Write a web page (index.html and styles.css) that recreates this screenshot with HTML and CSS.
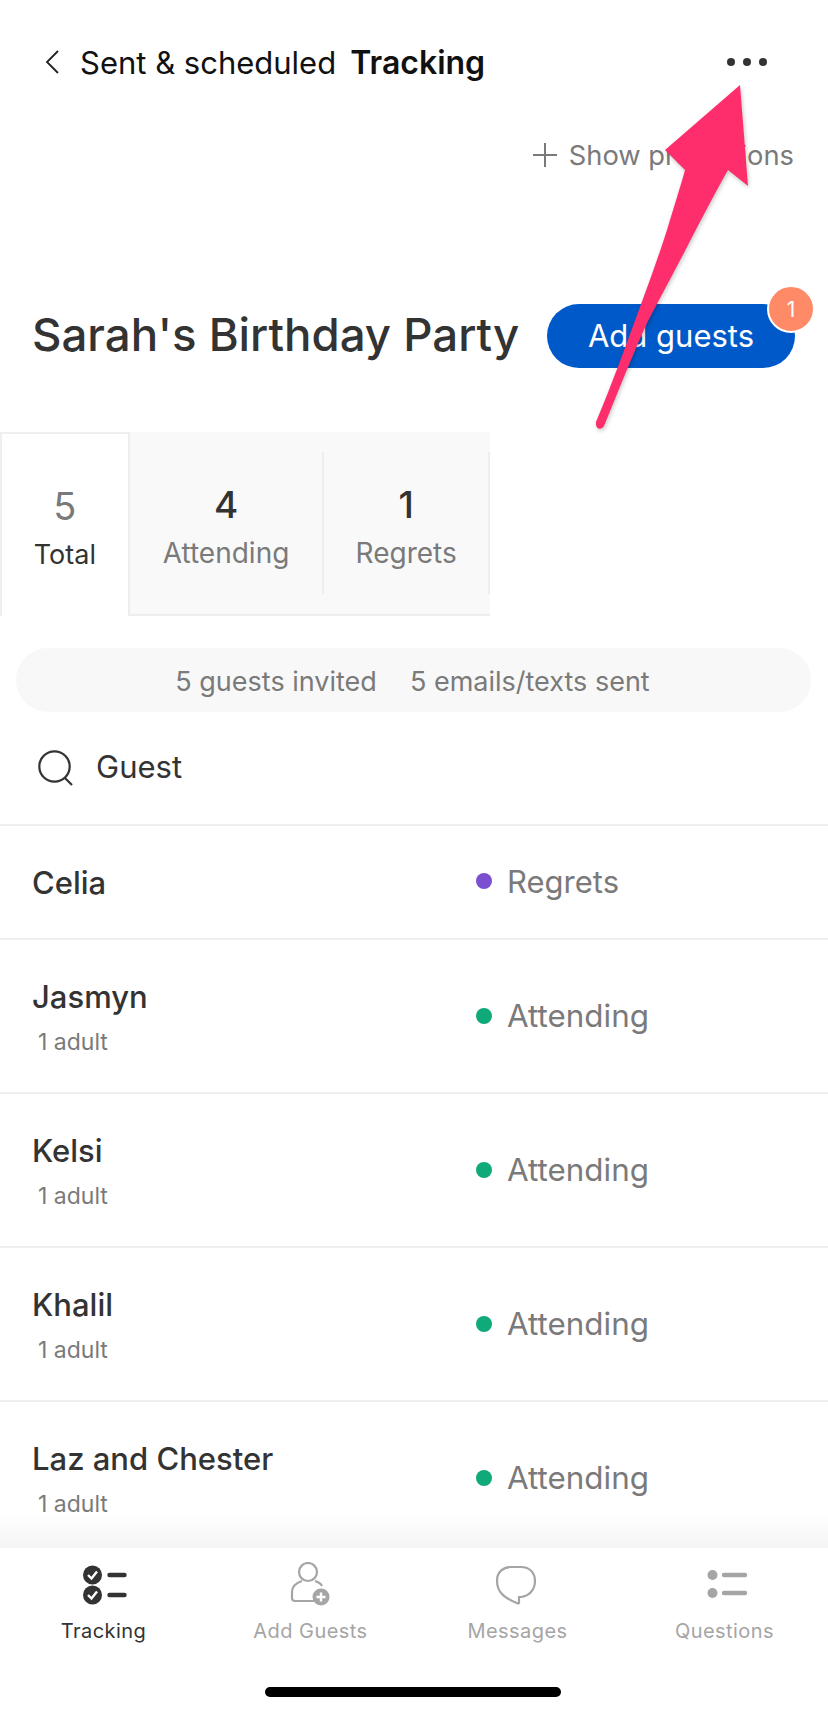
FILE: index.html
```html
<!DOCTYPE html>
<html lang="en">
<head>
<meta charset="utf-8">
<title>Tracking</title>
<link rel="stylesheet" href="styles.css">
</head>
<body>
<div class="page">
  <header class="topbar">
    <svg class="chevron" viewBox="0 0 14 24"><path d="M13 1 2 12l11 11"/></svg>
    <span class="crumb">Sent &amp; scheduled</span>
    <strong class="crumb-current">Tracking</strong>
    <span class="more"><i></i><i></i><i></i></span>
  </header>
  <div class="promo">
    <svg class="plus" viewBox="0 0 24 24"><path d="M12 0v24M0 12h24"/></svg>
    <span>Show promotions</span>
  </div>
  <div class="title-row">
    <h1>Sarah's Birthday Party</h1>
    <button class="add"><span class="add-label">Add guests</span><span class="badge">1</span></button>
  </div>
  <div class="stats">
    <div class="stat active"><b>5</b><span>Total</span></div>
    <div class="stat wide"><b>4</b><span>Attending</span></div>
    <i class="sep"></i>
    <div class="stat regrets"><b>1</b><span>Regrets</span></div>
    <i class="sep"></i>
  </div>
  <div class="summary"><span>5 guests invited</span><span>5 emails/texts sent</span></div>
  <div class="search">
    <svg viewBox="0 0 36 36"><circle cx="16.5" cy="16.5" r="15.2"/><path d="m27 28 7 7"/></svg>
    <span>Guest</span>
  </div>
  <main class="list">
    <div class="row short"><div class="who"><div class="name">Celia</div></div><div class="status"><i class="dot purple"></i>Regrets</div></div>
    <div class="row"><div class="who"><div class="name">Jasmyn</div><div class="sub">1 adult</div></div><div class="status"><i class="dot green"></i>Attending</div></div>
    <div class="row"><div class="who"><div class="name">Kelsi</div><div class="sub">1 adult</div></div><div class="status"><i class="dot green"></i>Attending</div></div>
    <div class="row"><div class="who"><div class="name">Khalil</div><div class="sub">1 adult</div></div><div class="status"><i class="dot green"></i>Attending</div></div>
    <div class="row"><div class="who"><div class="name">Laz and Chester</div><div class="sub">1 adult</div></div><div class="status"><i class="dot green"></i>Attending</div></div>
  </main>
  <nav class="nav">
    <div class="tab current">
      <svg viewBox="0 0 48 44">
        <circle class="fill" cx="12.5" cy="13" r="9.5"/><path class="tick" d="m8 13 3.5 3.5 5.5-7"/>
        <circle class="fill" cx="12.5" cy="33" r="9.5"/><path class="tick" d="m8 33 3.5 3.5 5.5-7"/>
        <path class="bar" d="M29.5 13h15M29.5 33h15"/>
      </svg>
      <span>Tracking</span>
    </div>
    <div class="tab">
      <svg viewBox="0 0 48 44">
        <circle class="line" cx="21" cy="10" r="9"/>
        <path class="line" d="M15 19c-6 2-10 6-10 11v6c0 2 1 3 3 3h19M28 19c3 1 6 3 7 5"/>
        <circle class="fill" cx="34" cy="35" r="8.5"/>
        <path class="plus-mark" d="M34 30.5v9M29.5 35h9"/>
      </svg>
      <span>Add Guests</span>
    </div>
    <div class="tab">
      <svg viewBox="0 0 48 44">
        <path class="line" d="M17 5h10c9 0 14 6 14 14 0 9-6 15-14 16h-2v6l-1 .5C13 37 3 32 3 19 3 10 9 5 17 5Z"/>
      </svg>
      <span>Messages</span>
    </div>
    <div class="tab">
      <svg viewBox="0 0 48 44">
        <circle class="fill" cx="11.5" cy="13" r="5"/><circle class="fill" cx="11.5" cy="31" r="5"/>
        <path class="bar" d="M23 13h21M23 31h21"/>
      </svg>
      <span>Questions</span>
    </div>
  </nav>
  <div class="home-zone"><span class="home"></span></div>
  <svg class="arrow" viewBox="0 0 828 1714">
    <path d="M740 85 748 186 728 170C712 198 698 226 687 247 672 276 660 298 647 323 632 356 618 392 604 426 601 431 595 429 596 422 612 384 628 340 640 307 650 280 659 255 667 230 673 210 680 188 685 170L665 150Z"/>
  </svg>
</div>
</body>
</html>
```
FILE: styles.css
```css
* { box-sizing: border-box; }
html, body { margin: 0; padding: 0; background: #fff; }
body { font-family: Inter, "Liberation Sans", sans-serif; color: #333; }
.page { position: relative; width: 828px; height: 1714px; overflow: hidden; display: flex; flex-direction: column; }

.topbar { height: 124px; flex: none; display: flex; align-items: center; padding: 0 61px 0 45px; font-size: 31px; color: #111; }
.chevron { width: 14px; height: 24px; margin-right: 21px; fill: none; stroke: #222; stroke-width: 1.8; }
.crumb-current { margin-left: 14px; font-size: 32px; font-weight: 600; }
.more { margin-left: auto; display: flex; gap: 8px; }
.more i { width: 8px; height: 8px; border-radius: 50%; background: #333; }

.promo { height: 62px; flex: none; display: flex; align-items: center; justify-content: flex-end; padding-right: 34px; font-size: 27.3px; color: #7a7a7a; }
.plus { width: 24px; height: 24px; margin-right: 12px; fill: none; stroke: #7a7a7a; stroke-width: 2; }

.title-row { margin-top: 118px; height: 64px; flex: none; display: flex; align-items: center; padding: 0 33px 0 32px; justify-content: space-between; }
h1 { margin: 0 0 4px; font-size: 45.6px; font-weight: 500; color: #333; }
.add { position: relative; width: 248px; height: 64px; border: 0; border-radius: 32px; background: #0059c8; color: #fff; font: 400 31px Inter, "Liberation Sans", sans-serif; }
.add-label { display: block; margin-top: -2px; }
.badge { position: absolute; top: -19px; right: -20px; width: 48px; height: 48px; border-radius: 50%; border: 2px solid #fff; background: #ff8a68; color: #fff; font-size: 21px; font-weight: 400; display: flex; align-items: center; justify-content: center; }

.stats { margin-top: 64px; width: 490px; height: 184px; flex: none; display: flex; background: #f9f9f9; border-bottom: 2px solid #eee; }
.stat { display: flex; flex-direction: column; align-items: center; padding-top: 50px; }
.stat b { font-size: 37px; line-height: 46px; font-weight: 500; color: #333; }
.stat span { margin-top: 4px; font-size: 28px; line-height: 42px; color: #7a7a7a; }
.stat.active { width: 130px; height: 184px; padding-top: 49px; background: #fff; border: 2px solid #eee; border-bottom: 0; }
.stat.active b { font-size: 38px; font-weight: 400; color: #7a7a7a; }
.stat.active span { margin-top: 5px; font-size: 27px; color: #333; }
.stat.wide { width: 193px; }
.stat.regrets { width: 164px; }
.sep { width: 2px; height: 142px; margin-top: 20px; background: #eee; flex: none; }

.summary { margin: 32px 17px 0 16px; height: 64px; flex: none; border-radius: 32px; background: #f8f8f8; display: flex; align-items: center; justify-content: center; gap: 33px; font-size: 27px; color: #7a7a7a; padding: 2px 2px 0 0; }

.search { height: 114px; flex: none; display: flex; align-items: center; padding-left: 38px; border-bottom: 2px solid #eee; font-size: 31px; color: #333; }
.search span { margin: 0 0 4px 22px; }
.search svg { width: 36px; height: 36px; fill: none; stroke: #333; stroke-width: 2.2; }

.list { flex: 1; min-height: 0; overflow: hidden; }
.row { height: 154px; display: flex; align-items: center; border-bottom: 2px solid #eee; padding-left: 32px; }
.row.short { height: 114px; }
.who { width: 444px; margin-top: 3px; }
.name { font-size: 31px; line-height: 36px; font-weight: 500; color: #333; }
.row.short .who { margin-top: 2px; }
.sub { margin-top: 12px; padding-left: 6px; font-size: 23px; line-height: 30px; color: #7a7a7a; }
.status { display: flex; align-items: center; font-size: 31.4px; color: #7a7a7a; }
.row.short .status { font-size: 31px; margin-top: -2px; }
.dot { width: 16px; height: 16px; border-radius: 50%; margin-right: 15px; }
.purple { background: #7b4fd0; }
.green { background: #0fa97a; }

.nav { position: relative; flex: none; height: 116px; background: #fff; display: grid; grid-template-columns: repeat(4, 1fr); padding-top: 14px; }
.nav::before { content: ""; position: absolute; left: 0; right: 0; top: -34px; height: 34px; background: linear-gradient(to bottom, rgba(245,245,245,0), #f4f4f4); }
.tab { display: flex; flex-direction: column; align-items: center; color: #a5a5a5; font-size: 20px; letter-spacing: .45px; }
.tab svg { width: 48px; height: 44px; flex: none; }
.tab span { margin-top: 11px; line-height: 28px; }
.tab .fill { fill: #a5a5a5; }
.tab .line { fill: none; stroke: #a5a5a5; stroke-width: 2.2; }
.tab .bar { fill: none; stroke: #a5a5a5; stroke-width: 4.4; stroke-linecap: round; }
.plus-mark { fill: none; stroke: #fff; stroke-width: 2.4; }
.tab.current { color: #333; }
.tab.current .fill { fill: #333; }
.tab.current .bar { stroke: #333; }
.tick { fill: none; stroke: #fff; stroke-width: 2.4; }

.home-zone { height: 50px; flex: none; display: flex; justify-content: center; padding: 23px 2px 0 0; background: #fff; }
.home { width: 296px; height: 10px; border-radius: 5px; background: #000; }

.arrow { position: absolute; inset: 0; width: 828px; height: 1714px; pointer-events: none; filter: drop-shadow(1px 2px 2px rgba(0,0,0,.22)); }
.arrow path { fill: #fe2e6d; }
```
